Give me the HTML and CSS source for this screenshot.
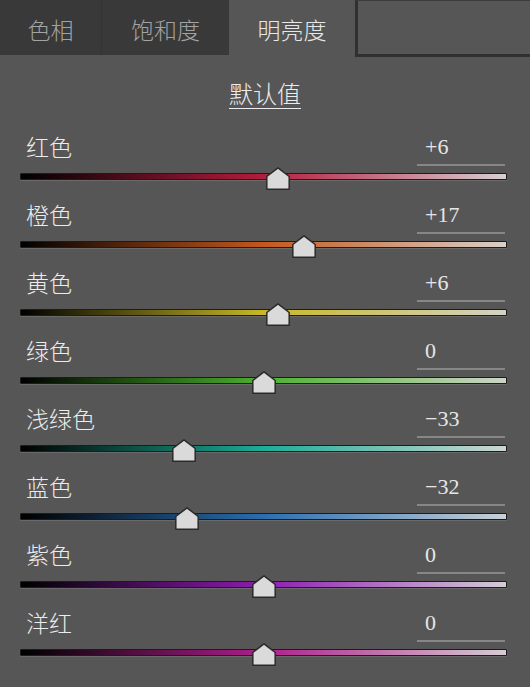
FILE: index.html
```html
<!DOCTYPE html>
<html lang="zh">
<head>
<meta charset="utf-8">
<link rel="stylesheet" href="styles.css">
</head>
<body>
<div class="tabs">
  <div class="tab tab-hue">色相</div>
  <div class="tab tab-sat">饱和度</div>
  <div class="tab tab-lum active">明亮度</div>
  <div class="tab-fill"></div>
</div>
<div class="reset"><span class="reset-link">默认值</span></div>
<div class="rows">
  <div class="row red">
    <div class="head"><span class="label">红色</span><span class="val">+6</span></div>
    <div class="slider"><div class="track"></div><svg class="thumb" style="left:52.96%" viewBox="0 0 24 23"><polygon points="12,0.8 23.2,9.5 23.2,22.2 0.8,22.2 0.8,9.5"/></svg></div>
  </div>
  <div class="row orange">
    <div class="head"><span class="label">橙色</span><span class="val">+17</span></div>
    <div class="slider"><div class="track"></div><svg class="thumb" style="left:58.37%" viewBox="0 0 24 23"><polygon points="12,0.8 23.2,9.5 23.2,22.2 0.8,22.2 0.8,9.5"/></svg></div>
  </div>
  <div class="row yellow">
    <div class="head"><span class="label">黄色</span><span class="val">+6</span></div>
    <div class="slider"><div class="track"></div><svg class="thumb" style="left:52.96%" viewBox="0 0 24 23"><polygon points="12,0.8 23.2,9.5 23.2,22.2 0.8,22.2 0.8,9.5"/></svg></div>
  </div>
  <div class="row green">
    <div class="head"><span class="label">绿色</span><span class="val">0</span></div>
    <div class="slider"><div class="track"></div><svg class="thumb" style="left:50%" viewBox="0 0 24 23"><polygon points="12,0.8 23.2,9.5 23.2,22.2 0.8,22.2 0.8,9.5"/></svg></div>
  </div>
  <div class="row aqua">
    <div class="head"><span class="label">浅绿色</span><span class="val">−33</span></div>
    <div class="slider"><div class="track"></div><svg class="thumb" style="left:33.73%" viewBox="0 0 24 23"><polygon points="12,0.8 23.2,9.5 23.2,22.2 0.8,22.2 0.8,9.5"/></svg></div>
  </div>
  <div class="row blue">
    <div class="head"><span class="label">蓝色</span><span class="val">−32</span></div>
    <div class="slider"><div class="track"></div><svg class="thumb" style="left:34.22%" viewBox="0 0 24 23"><polygon points="12,0.8 23.2,9.5 23.2,22.2 0.8,22.2 0.8,9.5"/></svg></div>
  </div>
  <div class="row purple">
    <div class="head"><span class="label">紫色</span><span class="val">0</span></div>
    <div class="slider"><div class="track"></div><svg class="thumb" style="left:50%" viewBox="0 0 24 23"><polygon points="12,0.8 23.2,9.5 23.2,22.2 0.8,22.2 0.8,9.5"/></svg></div>
  </div>
  <div class="row magenta">
    <div class="head"><span class="label">洋红</span><span class="val">0</span></div>
    <div class="slider"><div class="track"></div><svg class="thumb" style="left:50%" viewBox="0 0 24 23"><polygon points="12,0.8 23.2,9.5 23.2,22.2 0.8,22.2 0.8,9.5"/></svg></div>
  </div>
</div>
</body>
</html>
```
FILE: styles.css
```css
html, body {
  margin: 0;
  padding: 0;
}
body {
  width: 530px;
  height: 687px;
  overflow: hidden;
  background: #565656;
  font-family: "Noto Sans CJK SC", sans-serif;
  font-weight: 300;
}
.tabs {
  display: flex;
  height: 57px;
  align-items: flex-start;
}
.tab {
  height: 55px;
  box-sizing: border-box;
  padding-top: 3px;
  background: #393939;
  color: #a3a3a3;
  font-size: 23px;
  display: flex;
  align-items: center;
  justify-content: center;
}
.tab-hue { width: 101px; }
.tab-sat { width: 128px; border-left: 1px solid #343434; }
.tab-lum { width: 126px; }
.tab.active {
  background: #565656;
  color: #e8e8e8;
  height: 57px;
  padding-bottom: 2px;
}
.tab-fill {
  flex: 1;
  height: 57px;
  box-sizing: border-box;
  border-top: 1px solid #3c3c3c;
  border-left: 3px solid #303030;
  border-bottom: 3px solid #303030;
  background: #565656;
}
.reset {
  height: 71px;
  box-sizing: border-box;
  padding-top: 21px;
  text-align: center;
}
.reset-link {
  font-size: 24px;
  line-height: 30px;
  color: #ececec;
  text-decoration: underline;
  text-decoration-thickness: 1px;
  text-underline-offset: 5px;
}
.row {
  height: 68px;
}
.head {
  display: flex;
  justify-content: space-between;
  height: 38px;
  box-sizing: border-box;
  padding: 5px 25px 0 26px;
}
.label {
  font-size: 23px;
  line-height: 26px;
  color: #ececec;
}
.val {
  width: 88px;
  height: 33px;
  box-sizing: border-box;
  border-bottom: 2px solid #878787;
  padding-left: 8px;
  font-family: "Liberation Serif", serif;
  font-weight: 400;
  font-size: 22px;
  line-height: 28px;
  color: #e6e6e6;
}
.slider {
  position: relative;
  height: 30px;
  box-sizing: border-box;
  padding-top: 7px;
  margin: 0 23px 0 20px;
}
.track {
  height: 7px;
  box-sizing: border-box;
  border: 1px solid #1c1c1c;
  border-radius: 1px;
  box-shadow: 0 1px 1px #6c6c6c;
  background: linear-gradient(90deg, #000 0%, var(--c) 50%, var(--l) 100%);
}
.thumb {
  position: absolute;
  top: 1px;
  width: 24px;
  height: 23px;
  transform: translateX(-50%);
}
.thumb polygon {
  fill: #dadada;
  stroke: #2a2a2a;
  stroke-width: 1.5;
  stroke-linejoin: round;
}
.red { --c: #b41c3c; --l: #d6cfd1; }
.orange { --c: #c4581c; --l: #dad0c9; }
.yellow { --c: #c8b828; --l: #d4d2c4; }
.green { --c: #4cb22c; --l: #ccd4c8; }
.aqua { --c: #1cae98; --l: #ccd6d2; }
.blue { --c: #2a6eb0; --l: #c8d0d8; }
.purple { --c: #8e1cb2; --l: #d4ccd6; }
.magenta { --c: #b01e8c; --l: #d6ccd2; }
```
